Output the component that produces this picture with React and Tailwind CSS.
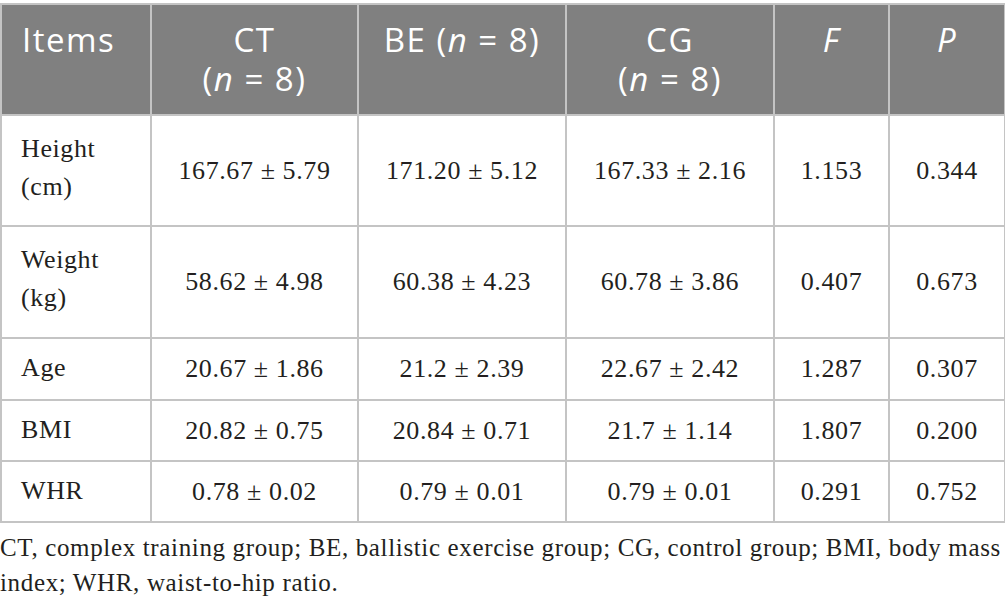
import React from "react";

const rows = [
  { label: ["Height", "(cm)"], ct: "167.67 ± 5.79", be: "171.20 ± 5.12", cg: "167.33 ± 2.16", f: "1.153", p: "0.344", h: "h-[111px]" },
  { label: ["Weight", "(kg)"], ct: "58.62 ± 4.98", be: "60.38 ± 4.23", cg: "60.78 ± 3.86", f: "0.407", p: "0.673", h: "h-[112px]" },
  { label: ["Age"], ct: "20.67 ± 1.86", be: "21.2 ± 2.39", cg: "22.67 ± 2.42", f: "1.287", p: "0.307", h: "h-[62px]" },
  { label: ["BMI"], ct: "20.82 ± 0.75", be: "20.84 ± 0.71", cg: "21.7 ± 1.14", f: "1.807", p: "0.200", h: "h-[61px]" },
  { label: ["WHR"], ct: "0.78 ± 0.02", be: "0.79 ± 0.01", cg: "0.79 ± 0.01", f: "0.291", p: "0.752", h: "h-[61px]" },
];

const th = "border-2 border-[#c4c4c4] align-top pt-[15px] text-[33px] leading-[39px] tracking-[1.5px] font-normal text-white";
const td = "border-2 border-[#c4c4c4] text-center align-middle";

export default function App() {
  return (
    <div className="w-[1005px] h-[611px] bg-white pt-[3px] font-['Liberation_Serif',serif] text-[#231f20]">
      <table className="border-collapse table-fixed w-[1004px]">
        <colgroup>
          <col className="w-[150px]" />
          <col className="w-[207px]" />
          <col className="w-[208px]" />
          <col className="w-[208px]" />
          <col className="w-[115px]" />
          <col className="w-[116px]" />
        </colgroup>
        <thead>
          <tr className="h-[111px] bg-[#808080] font-['Open_Sans',sans-serif]">
            <th className={`${th} text-left pl-[20px]`}>Items</th>
            <th className={`${th} text-center`}>
              CT
              <br />(<i>n</i> = 8)
            </th>
            <th className={`${th} text-center`}>
              BE (<i>n</i> = 8)
            </th>
            <th className={`${th} text-center`}>
              CG
              <br />(<i>n</i> = 8)
            </th>
            <th className={`${th} text-center`}>
              <i>F</i>
            </th>
            <th className={`${th} text-center`}>
              <i>P</i>
            </th>
          </tr>
        </thead>
        <tbody className="text-[26px] leading-[38px] tracking-[0.6px]">
          {rows.map((r) => (
            <tr key={r.label[0]} className={r.h}>
              <td
                className={`border-2 border-[#c4c4c4] pl-[19px] align-middle ${
                  r.label.length > 1 ? "pb-[6px]" : "pb-[2px]"
                }`}
              >
                {r.label.map((l, i) => (
                  <div key={i}>{l}</div>
                ))}
              </td>
              <td className={td}>{r.ct}</td>
              <td className={td}>{r.be}</td>
              <td className={td}>{r.cg}</td>
              <td className={td}>{r.f}</td>
              <td className={td}>{r.p}</td>
            </tr>
          ))}
        </tbody>
      </table>
      <p className="pt-[7px] text-[25px] leading-[35px] tracking-[0.65px]">
        CT, complex training group; BE, ballistic exercise group; CG, control group; BMI, body mass index; WHR, waist-to-hip ratio.
      </p>
    </div>
  );
}
